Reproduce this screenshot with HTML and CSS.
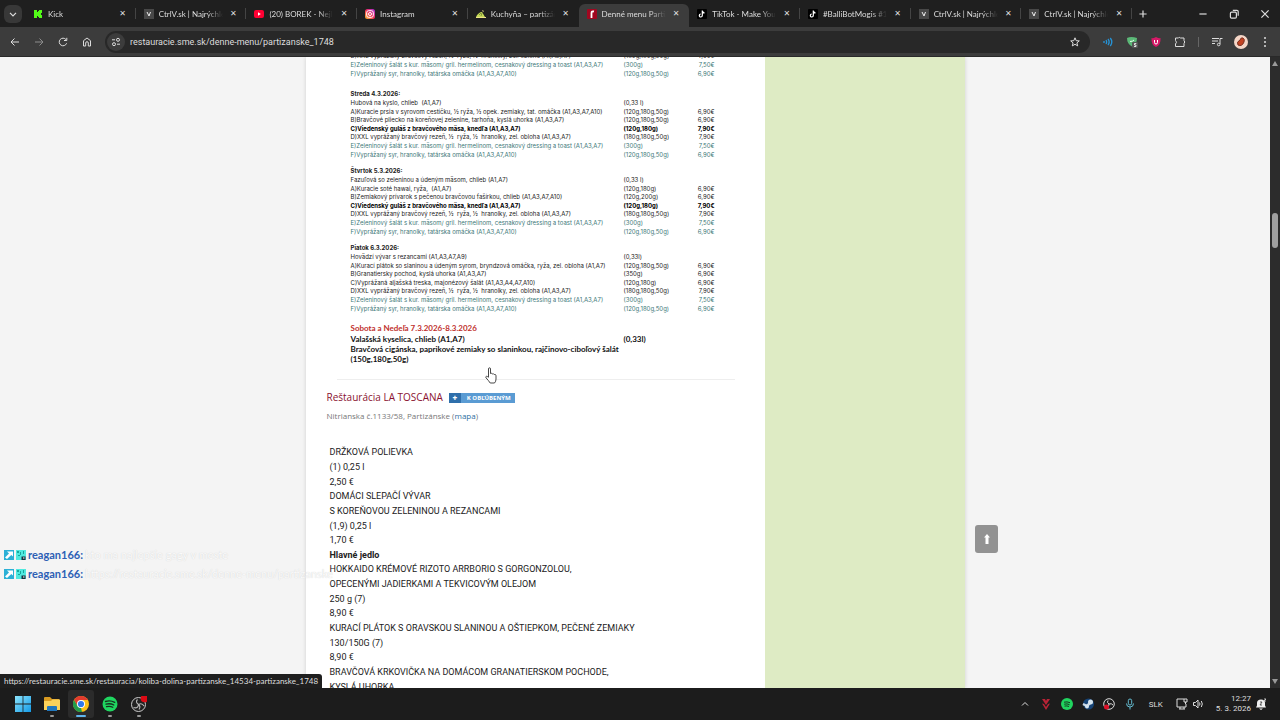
FILE: index.html
```
<!DOCTYPE html>
<html lang="sk">
<head>
    <meta charset="UTF-8">
    <meta name="viewport" content="width=device-width, initial-scale=1.0">
    <title>Denné menu Partizánske</title>
    <link rel="stylesheet" href="styles.css">
</head>
<body>
    <header class="browser">
        <div class="tab-strip">
            <button class="tab-search" aria-label="Hľadať karty"><svg viewBox="0 0 10 10"><path d="M2.5 4 5 6.5 7.5 4" /></svg></button>
            <nav class="tabs">
                <div class="tab">
                    <svg class="favicon" viewBox="0 0 10 10"><path fill="#53fc18" d="M1 1h3v2h1V2h1V1h3v3H8v1H7v0h1v1h1v3H6V8H5V7H4v2H1z" /></svg>
                    <a href="#">Kick</a><button aria-label="Zavrieť"></button>
                </div>
                <div class="tab">
                    <svg class="favicon" viewBox="0 0 10 10"><path fill="#484848" d="M0 0h10v10H0z" /><path d="M3 3l2 4 1.500-4" fill="none" stroke="#eee" /></svg>
                    <a href="#">CtrlV.sk | Najrýchlejšie</a><button aria-label="Zavrieť"></button>
                </div>
                <div class="tab">
                    <svg class="favicon" viewBox="0 0 10 10"><rect y="1" width="10" height="8" rx="2" fill="#f03" /><path fill="#fff" d="M4 3.300v3.400L6.800 5z" /></svg>
                    <a href="#">(20) BOREK - Nejlepší</a><button aria-label="Zavrieť"></button>
                </div>
                <div class="tab">
                    <svg class="favicon" viewBox="0 0 10 10"><defs><linearGradient id="insta" x1="0" y1="1" x2="1" y2="0"><stop stop-color="#fdc02f" /><stop offset=".5" stop-color="#f22f5b" /><stop offset="1" stop-color="#a02fe0" /></linearGradient></defs><rect width="10" height="10" rx="2.500" fill="url(#insta)" /><g fill="none" stroke="#fff"><rect x="1.700" y="1.700" width="6.600" height="6.600" rx="2" /><circle cx="5" cy="5" r="1.500" /></g></svg>
                    <a href="#">Instagram</a><button aria-label="Zavrieť"></button>
                </div>
                <div class="tab">
                    <svg class="favicon" viewBox="0 0 10 10"><path fill="#c5d957" d="M0 8c1-3 4-5 6-5l3 5z" /><path fill="#eee38a" d="M0 8h10v1H0zM6 1l2 1-1 1z" /><path stroke="#506020" d="M3 6l2-2M5 7l1-3" stroke-width=".6" /></svg>
                    <a href="#">Kuchyňa – partizánske</a><button aria-label="Zavrieť"></button>
                </div>
                <div class="tab active">
                    <svg class="favicon" viewBox="0 0 10 10"><rect width="10" height="10" rx="1" fill="#a00720" /><path d="M4.500 9V4q0-2 2.500-1.500" fill="none" stroke="#fff" stroke-width="1.800" /></svg>
                    <a href="#">Denné menu Partizánske</a><button aria-label="Zavrieť"></button>
                </div>
                <div class="tab">
                    <svg class="favicon" viewBox="0 0 10 10"><rect width="10" height="10" rx="1" fill="#000" /><path d="M5.300 1.500v5a1.500 1.500 0 1 1-1.500-1.500M5.300 2q.5 1.800 2.200 1.800" fill="none" stroke="#fff" stroke-width="1.200" /></svg>
                    <a href="#">TikTok - Make Your Day</a><button aria-label="Zavrieť"></button>
                </div>
                <div class="tab">
                    <svg class="favicon" viewBox="0 0 10 10"><rect width="10" height="10" rx="1" fill="#000" /><path d="M5.300 1.500v5a1.500 1.500 0 1 1-1.500-1.500M5.300 2q.5 1.800 2.200 1.800" fill="none" stroke="#fff" stroke-width="1.200" /></svg>
                    <a href="#">#BalliBotMogis #1</a><button aria-label="Zavrieť"></button>
                </div>
                <div class="tab">
                    <svg class="favicon" viewBox="0 0 10 10"><path fill="#484848" d="M0 0h10v10H0z" /><path d="M3 3l2 4 1.500-4" fill="none" stroke="#eee" /></svg>
                    <a href="#">CtrlV.sk | Najrýchlejšie</a><button aria-label="Zavrieť"></button>
                </div>
                <div class="tab">
                    <svg class="favicon" viewBox="0 0 10 10"><path fill="#484848" d="M0 0h10v10H0z" /><path d="M3 3l2 4 1.500-4" fill="none" stroke="#eee" /></svg>
                    <a href="#">CtrlV.sk | Najrýchlejšie</a><button aria-label="Zavrieť"></button>
                </div>
            </nav>
            <button class="new-tab" aria-label="Nová karta"><svg viewBox="0 0 10 10"><path d="M5 2v6M2 5h6" /></svg></button>
            <div class="window-buttons">
                <button aria-label="Minimalizovať"><svg viewBox="0 0 10 10"><path d="M2 5h6" /></svg></button>
                <button aria-label="Obnoviť"><svg viewBox="0 0 10 10"><rect x="2" y="3.500" width="5" height="5" rx="1" /><path d="M4 2h3.500q1 0 1 1v3.500" /></svg></button>
                <button aria-label="Zavrieť okno"><svg viewBox="0 0 10 10"><path d="M2 2l6 6M8 2 2 8" /></svg></button>
            </div>
        </div>
        <div class="toolbar">
            <button aria-label="Späť"><svg viewBox="0 0 12 12"><path d="M10 6H2M5.500 2.500 2 6l3.500 3.500" /></svg></button>
            <button class="dim" aria-label="Dopredu"><svg viewBox="0 0 12 12"><path d="M2 6h8M6.500 2.500 10 6 6.500 9.500" /></svg></button>
            <button aria-label="Obnoviť stránku"><svg viewBox="0 0 12 12"><path d="M9.600 7.300A3.800 3.800 0 1 1 9 3.600M9.800 1.800v2.700H7" /></svg></button>
            <button aria-label="Domov"><svg viewBox="0 0 12 12"><path d="M2.500 10V4.700L6 2l3.500 2.700V10H7.300V7a1.300 1.300 0 0 0-2.600 0v3z" /></svg></button>
            <div class="address">
                <span class="site-info"><svg viewBox="0 0 12 12"><path d="M2 3.800h3M7 8.200h3" /><circle cx="8" cy="3.800" r="1.500" /><circle cx="4" cy="8.200" r="1.500" /></svg></span>
                <input type="text" aria-label="Adresa" value="restauracie.sme.sk/denne-menu/partizanske_1748">
                <button aria-label="Záložka"><svg viewBox="0 0 12 12"><path d="m6 1.800 1.200 2.900 3.100.2-2.400 2 .8 3L6 8.300 3.300 9.900l.8-3-2.400-2 3.100-.2z" /></svg></button>
            </div>
            <div class="extensions">
                <button aria-label="Zvuk"><svg viewBox="0 0 12 12"><g stroke="#2594d8" stroke-width="1.300"><path d="M2 5v2M4 4q1.300 2 0 4M6 3q2.300 3 0 6M8.300 2q3 4 0 8" /></g></svg></button>
                <button aria-label="Ochrana"><svg viewBox="0 0 12 12"><path d="M1 2q4-2 10 0 0 6-5 8.500Q1 8 1 2z" fill="#5cb978" stroke="none" /><path d="M4 5.500q3 0 4-1.500" stroke="#e5ffe9" /><rect x="6" y="6" width="6" height="6" rx="1" fill="#555" stroke="none" /><path d="M10.300 7.500H8.500V9h1.500v1.500H8" stroke="#fff" stroke-width=".8" /></svg></button>
                <button aria-label="Štít"><svg viewBox="0 0 12 12"><path d="M6 1q2 1.500 4.500 1Q11 9 6 11 1 9 1.500 2 4 2.500 6 1z" fill="#d51967" stroke="none" /><path d="M4.500 4v2.500a1.500 1.500 0 0 0 3 0V4" stroke="#fff" /></svg></button>
                <button aria-label="Rozšírenia"><svg viewBox="0 0 12 12"><path d="M1.500 2h3q.5-1.500 2 0H10v2.500q1.500 1.500 0 3V10.500H1.500V8q2-1.800 0-3.500z" /></svg></button>
                <span class="divider"></span>
                <button aria-label="Médiá"><svg viewBox="0 0 12 12"><path d="M1 2.500h7M1 5h6M1 7.500h3M9 8V2.500h2.500" /><circle cx="7.700" cy="8.500" r="1.300" /></svg></button>
                <button class="profile" aria-label="Profil"><svg viewBox="0 0 14 14"><circle cx="7" cy="7" r="7" fill="#f5d6c7" stroke="none" /><path d="M4 10q-2-3 2-5 1-3 3-2 2 1 1 4-2 5-6 3z" fill="#c44322" stroke="#7a3325" /></svg></button>
                <button aria-label="Ponuka"><svg viewBox="0 0 12 12"><g fill="#ddd" stroke="none"><circle cx="6" cy="2" r="1" /><circle cx="6" cy="6" r="1" /><circle cx="6" cy="10" r="1" /></g></svg></button>
            </div>
        </div>
    </header>

    <div class="viewport">
        <main class="page">
            <section class="content">
                <div class="week-menu">
                    <table class="day cut">
                        <tr><td>D)XXL vyprážaný bravčový rezeň, ½ &nbsp;ryža, ½ &nbsp;hranolky, zel. obloha (A1,A3,A7)</td><td>(180g,180g,50g)</td><td>7,90€</td></tr>
                        <tr class="light"><td>E)Zeleninový šalát s kur. mäsom/ gril. hermelínom, cesnakový dressing a toast (A1,A3,A7)</td><td>(300g)</td><td>7,50€</td></tr>
                        <tr class="light"><td>F)Vyprážaný syr, hranolky, tatárska omáčka (A1,A3,A7,A10)</td><td>(120g,180g,50g)</td><td>6,90€</td></tr>
                    </table>
                    <table class="day">
                        <tr><th>Streda 4.3.2026:</th><td></td><td></td></tr>
                        <tr><td>Hubová na kyslo, chlieb &nbsp;(A1,A7)</td><td>(0,33 l)</td><td></td></tr>
                        <tr><td>A)Kuracie prsia v syrovom cestíčku, ½ ryža, ½ opek. zemiaky, tat. omáčka (A1,A3,A7,A10)</td><td>(120g,180g,50g)</td><td>6,90€</td></tr>
                        <tr><td>B)Bravčové pliecko na koreňovej zelenine, tarhoňa, kyslá uhorka (A1,A3,A7)</td><td>(120g,180g,50g)</td><td>6,90€</td></tr>
                        <tr class="strong"><td>C)Viedenský guláš z bravčového mäsa, knedľa (A1,A3,A7)</td><td>(120g,180g)</td><td>7,90€</td></tr>
                        <tr><td>D)XXL vyprážaný bravčový rezeň, ½ &nbsp;ryža, ½ &nbsp;hranolky, zel. obloha (A1,A3,A7)</td><td>(180g,180g,50g)</td><td>7,90€</td></tr>
                        <tr class="light"><td>E)Zeleninový šalát s kur. mäsom/ gril. hermelínom, cesnakový dressing a toast (A1,A3,A7)</td><td>(300g)</td><td>7,50€</td></tr>
                        <tr class="light"><td>F)Vyprážaný syr, hranolky, tatárska omáčka (A1,A3,A7,A10)</td><td>(120g,180g,50g)</td><td>6,90€</td></tr>
                    </table>
                    <table class="day">
                        <tr><th>Štvrtok 5.3.2026:</th><td></td><td></td></tr>
                        <tr><td>Fazuľová so zeleninou a údeným mäsom, chlieb (A1,A7)</td><td>(0,33 l)</td><td></td></tr>
                        <tr><td>A)Kuracie soté hawai, ryža, &nbsp;(A1,A7)</td><td>(120g,180g)</td><td>6,90€</td></tr>
                        <tr><td>B)Zemiakový prívarok s pečenou bravčovou fašírkou, chlieb (A1,A3,A7,A10)</td><td>(120g,200g)</td><td>6,90€</td></tr>
                        <tr class="strong"><td>C)Viedenský guláš z bravčového mäsa, knedľa (A1,A3,A7)</td><td>(120g,180g)</td><td>7,90€</td></tr>
                        <tr><td>D)XXL vyprážaný bravčový rezeň, ½ &nbsp;ryža, ½ &nbsp;hranolky, zel. obloha (A1,A3,A7)</td><td>(180g,180g,50g)</td><td>7,90€</td></tr>
                        <tr class="light"><td>E)Zeleninový šalát s kur. mäsom/ gril. hermelínom, cesnakový dressing a toast (A1,A3,A7)</td><td>(300g)</td><td>7,50€</td></tr>
                        <tr class="light"><td>F)Vyprážaný syr, hranolky, tatárska omáčka (A1,A3,A7,A10)</td><td>(120g,180g,50g)</td><td>6,90€</td></tr>
                    </table>
                    <table class="day">
                        <tr><th>Piatok 6.3.2026:</th><td></td><td></td></tr>
                        <tr><td>Hovädzí vývar s rezancami (A1,A3,A7,A9)</td><td>(0,33l)</td><td></td></tr>
                        <tr><td>A)Kurací plátok so slaninou a údeným syrom, bryndzová omáčka, ryža, zel. obloha (A1,A7)</td><td>(120g,180g,50g)</td><td>6,90€</td></tr>
                        <tr><td>B)Granatiersky pochod, kyslá uhorka (A1,A3,A7)</td><td>(350g)</td><td>6,90€</td></tr>
                        <tr><td>C)Vyprážaná aljašská treska, majonézový šalát (A1,A3,A4,A7,A10)</td><td>(120g,180g)</td><td>6,90€</td></tr>
                        <tr><td>D)XXL vyprážaný bravčový rezeň, ½ &nbsp;ryža, ½ &nbsp;hranolky, zel. obloha (A1,A3,A7)</td><td>(180g,180g,50g)</td><td>7,90€</td></tr>
                        <tr class="light"><td>E)Zeleninový šalát s kur. mäsom/ gril. hermelínom, cesnakový dressing a toast (A1,A3,A7)</td><td>(300g)</td><td>7,50€</td></tr>
                        <tr class="light"><td>F)Vyprážaný syr, hranolky, tatárska omáčka (A1,A3,A7,A10)</td><td>(120g,180g,50g)</td><td>6,90€</td></tr>
                    </table>
                    <table class="weekend">
                        <tr class="title"><th>Sobota a Nedeľa 7.3.2026-8.3.2026</th><td></td></tr>
                        <tr><td>Valašská kyselica, chlieb (A1,A7)</td><td>(0,33l)</td></tr>
                        <tr><td>Bravčová cigánska, paprikové zemiaky so slaninkou, rajčinovo-ciboľový šalát (150g,180g,50g)</td><td></td></tr>
                    </table>
                </div>
                <article class="restaurant">
                    <div class="heading">
                        <h2>Reštaurácia LA TOSCANA</h2>
                        <button class="favourite"><b>+</b><span>K OBĽÚBENÝM</span></button>
                    </div>
                    <p class="place">Nitrianska č.1133/58, Partizánske (<a href="#">mapa</a>)</p>
                    <ul class="dishes">
                        <li>DRŽKOVÁ POLIEVKA</li>
                        <li>(1) 0,25 l</li>
                        <li>2,50 €</li>
                        <li>DOMÁCI SLEPAČÍ VÝVAR</li>
                        <li>S KOREŇOVOU ZELENINOU A REZANCAMI</li>
                        <li>(1,9) 0,25 l</li>
                        <li>1,70 €</li>
                        <li><b>Hlavné jedlo</b></li>
                        <li>HOKKAIDO KRÉMOVÉ RIZOTO ARRBORIO S GORGONZOLOU,</li>
                        <li>OPECENÝMI JADIERKAMI A TEKVICOVÝM OLEJOM</li>
                        <li>250 g (7)</li>
                        <li>8,90 €</li>
                        <li>KURACÍ PLÁTOK S ORAVSKOU SLANINOU A OŠTIEPKOM, PEČENÉ ZEMIAKY</li>
                        <li>130/150G (7)</li>
                        <li>8,90 €</li>
                        <li>BRAVČOVÁ KRKOVIČKA NA DOMÁCOM GRANATIERSKOM POCHODE,</li>
                        <li>KYSLÁ UHORKA</li>
                    </ul>
                </article>
            </section>
            <aside class="side"></aside>
        </main>
        <div class="scrollbar"><i class="up"></i><i class="thumb"></i><i class="down"></i></div>

        <button class="to-top" aria-label="Hore"><svg viewBox="0 0 12 12"><path fill="#fff" d="M6 1l3 3.500H7.500V11h-3V4.500H3z" /></svg></button>
        <div class="chat">
            <p>
                <svg viewBox="0 0 10 10"><path fill="#2bb0d6" d="M0 0h10v10H0z" /><path fill="#fff" d="M3 1.500h6v5L7.300 5 3 9 1 7.500 5 3.500z" /></svg>
                <svg viewBox="0 0 10 10"><path fill="#4fe9df" d="M0 0h10v10H0z" /><path fill="#16a79c" d="M1 1h2v2H1zM4 2h1v3H4zM7 1h1v3H7zM2 5h2v1H2z" /><path fill="#17323f" d="M5.500 6.500h4V10h-4z" /><path fill="#fff" d="M7 7.500h1.500v1H7z" /></svg>
                <b>reagan166:</b><span>kto ma najlepšie gagy v meste</span>
            </p>
            <p>
                <svg viewBox="0 0 10 10"><path fill="#2bb0d6" d="M0 0h10v10H0z" /><path fill="#fff" d="M3 1.500h6v5L7.300 5 3 9 1 7.500 5 3.500z" /></svg>
                <svg viewBox="0 0 10 10"><path fill="#4fe9df" d="M0 0h10v10H0z" /><path fill="#16a79c" d="M1 1h2v2H1zM4 2h1v3H4zM7 1h1v3H7zM2 5h2v1H2z" /><path fill="#17323f" d="M5.500 6.500h4V10h-4z" /><path fill="#fff" d="M7 7.500h1.500v1H7z" /></svg>
                <b>reagan166:</b><span>https://restauracie.sme.sk/denne-menu/partizanske</span>
            </p>
        </div>
        <div class="status">https://restauracie.sme.sk/restauracia/koliba-dolina-partizanske_14534-partizanske_1748</div>
        <svg class="cursor" viewBox="0 0 12 17"><path d="M3.500 10V2q0-1.200 1-1.200t1 1.200v4.500q1.500-.6 2 .4 1.400-.4 1.800.6 1.700-.3 1.700 1.200V12q0 2.500-1.500 4H5.200Q3.500 13.500 1 10.800q-.6-1.300.5-1.500 1 0 2 1.200" fill="#fff" stroke="#333" stroke-width=".9" /></svg>
    </div>

    <footer class="taskbar">
        <div class="apps">
            <button aria-label="Štart"><svg viewBox="0 0 16 16"><defs><linearGradient id="win" x2="1" y2="1"><stop stop-color="#8ce4fb" /><stop offset="1" stop-color="#149be8" /></linearGradient></defs><path fill="url(#win)" d="M0 0h7.600v7.600H0zM8.400 0H16v7.600H8.400zM0 8.400h7.600V16H0zM8.400 8.400H16V16H8.400z" /></svg></button>
            <button class="open" aria-label="Prieskumník"><svg viewBox="0 0 16 16"><path fill="#d99b21" d="M0 2q0-1 1-1h5l2 2h7v4H0z" /><path fill="#fbd25a" d="M0 5h7l1.500-1.500H16V14H0z" /><path fill="#2177bd" d="M3 15v-4q0-1 1-1h8q1 0 1 1v4z" /></svg></button>
            <button class="open current" aria-label="Chrome"><svg viewBox="0 0 16 16"><circle cx="8" cy="8" r="8" fill="#fbc116" /><path fill="#e33b2e" d="M1.070 4A8 8 0 0 1 14.930 4H8L4.540 10z" /><path fill="#229c4b" d="M1.070 4 4.540 10 8 12 9 15.940A8 8 0 0 1 1.070 4z" /><circle cx="8" cy="8" r="4" fill="#fff" /><circle cx="8" cy="8" r="3.100" fill="#3179e8" /></svg></button>
            <button class="open" aria-label="Spotify"><svg viewBox="0 0 16 16"><circle cx="8" cy="8" r="7.500" fill="#1fd660" /><path d="M3.500 5.500q5-1.400 9.200.9M4 8.200q4.200-1.200 7.800.8M4.500 10.700q3.500-1 6.300.6" fill="none" stroke="#17311f" stroke-width="1.300" stroke-linecap="round" /></svg></button>
            <button class="open" aria-label="OBS"><svg viewBox="0 0 16 16"><circle cx="7.500" cy="8.500" r="7" fill="#222" stroke="#ccc" /><path d="M6.500 3.500q-2.500 2.500 1 5 3.500-2 5.500 1.500M7.500 8.500q-.5 4.500-5 3M7.500 8.500q2.500 2 .5 5" fill="none" stroke="#bbb" stroke-width="1.100" /><circle cx="13.500" cy="2.500" r="3.800" fill="#dc0a14" /></svg></button>
        </div>
        <div class="tray">
            <svg viewBox="0 0 12 12"><path d="M3 7.500 6 4.500l3 3" /></svg>
            <svg viewBox="0 0 12 12"><path fill="#b92336" stroke="none" d="M2 1h3l1 2 1-2h3L6 7zM2 5.500 6 12l4-6.500-2 .5-2 3-2-3z" /></svg>
            <svg viewBox="0 0 12 12"><circle cx="6" cy="6" r="6" fill="#20d45f" stroke="none" /><path d="M3 4.200q3-.9 6 .5M3.200 6.200q3-.9 5.300.5M3.500 8.100q2.500-.6 4.500.4" stroke="#173b22" /></svg>
            <svg viewBox="0 0 12 12"><circle cx="6.500" cy="6" r="5.500" fill="#164477" stroke="none" /><path d="M1 6l4 2 3-3" stroke="#cbd9e6" stroke-width="2.500" /><circle cx="8.500" cy="4" r="2.500" fill="#d5e5f0" stroke="none" /><circle cx="5" cy="8.500" r="2" fill="#d5e5f0" stroke="none" /></svg>
            <svg viewBox="0 0 12 12"><circle cx="6" cy="6" r="5.300" /><path d="M5 2.500q-1.500 2 1 3.500 2.500-1 4 1M6 6q0 3-2 3.500" /><circle cx="3.500" cy="9" r="2.500" fill="#dc1027" stroke="none" /></svg>
            <svg viewBox="0 0 12 12"><g stroke="#65bdd2"><rect x="4.300" y="1" width="3.400" height="6" rx="1.700" /><path d="M2.500 5.500q0 3.500 3.500 3.500t3.500-3.500M6 9v2.500" /></g></svg>
            <span class="lang">SLK</span>
            <div class="quick">
                <svg viewBox="0 0 12 12"><path d="M8 1H1v8h9V6M3 11h6M4 9v2M8 9v2M8 1h3v3H8zM9.500 4v2" /></svg>
                <svg viewBox="0 0 12 12"><path d="M1.500 4.500h2L6 2v8L3.500 7.500h-2zM7.500 4.500q1 1.500 0 3M9.300 3q2 3 0 6" /></svg>
            </div>
            <div class="date">
                <div class="clock"><time>12:27</time><span>5. 3. 2026</span></div>
                <svg viewBox="0 0 12 12"><path fill="#eee" stroke="none" d="M1 9.500l1-2V5q0-3.500 4-3.500T10 5v2.500l1 2zM4 10.500h4L6 12z" /><path d="M5 4h2L5 7h2" stroke="#333" stroke-width=".8" /><path d="M9 1h2L9 3h2" stroke-width=".8" /></svg>
            </div>
        </div>
    </footer>
</body>
</html>
```
FILE: styles.css
```
* {
    box-sizing: border-box;
}

body {
    margin: 0;
    height: 100vh;
    display: flex;
    flex-direction: column;
    overflow: hidden;
    font-family: Roboto, sans-serif;
    background-color: #1c1c1c;
    color: #ddd;
}

button {
    padding: 0;
    border: none;
    background: none;
    color: inherit;
    font: inherit;
    display: flex;
    align-items: center;
    justify-content: center;
}

a {
    color: inherit;
    text-decoration: none;
}

svg {
    flex: none;
}

/* browser frame */
.tab-strip {
    display: flex;
    align-items: center;
    height: 27px;
    background-color: #1f1f1f;
}

.tab-strip svg,
.toolbar svg,
.tray svg {
    width: 12px;
    height: 12px;
    fill: none;
    stroke: #ddd;
}

.tab-search {
    width: 18px;
    height: 18px;
    margin: 0 3px 0 4px;
    border-radius: 6px;
    background-color: #383838;
}

.tabs {
    display: flex;
    flex: 1;
    min-width: 0;
    align-self: stretch;
    padding-top: 4px;
}

.tab {
    position: relative;
    display: flex;
    flex: 1;
    min-width: 0;
    align-items: center;
    padding: 0 7px 4px 8px;
    font-family: Lato, sans-serif;
    font-size: 8px;
}

.tab::after {
    content: "";
    position: absolute;
    right: 0;
    top: 4px;
    width: 1px;
    height: 11px;
    background-color: #444;
}

.tab.active::after,
.tab:has(+ .active)::after {
    display: none;
}

.tab.active {
    background-color: #3c3c3c;
    border-radius: 6px 6px 0 0;
}

.tab-strip .favicon {
    width: 10px;
    height: 10px;
    stroke: none;
}

.tab a {
    flex: 1;
    min-width: 0;
    margin-left: 5px;
    overflow: hidden;
    white-space: nowrap;
    mask-image: linear-gradient(to right, #000 48px, transparent 64px);
}

.tab button {
    width: 12px;
    height: 12px;
}

.tab button::before {
    content: "✕";
    font: 8px "DejaVu Sans", sans-serif;
}

.new-tab {
    width: 22px;
}

.window-buttons {
    display: flex;
    gap: 19px;
    margin: 0 9px 0 43px;
}

.toolbar {
    display: flex;
    align-items: center;
    gap: 12px;
    height: 30px;
    padding: 0 9px;
    background-color: #3c3c3c;
    border-bottom: 1px solid #292929;
}

.toolbar .dim {
    opacity: 0.5;
}

.address {
    display: flex;
    flex: 1;
    align-items: center;
    height: 22px;
    padding: 0 9px 0 2px;
    border-radius: 11px;
    background-color: #282828;
}

.site-info {
    display: flex;
    align-items: center;
    justify-content: center;
    width: 18px;
    height: 18px;
    border-radius: 9px;
    background-color: #3c3c3c;
}

.address input {
    flex: 1;
    min-width: 0;
    padding: 0 5px;
    border: none;
    outline: none;
    background: none;
    color: #ddd;
    font: 9px Roboto, sans-serif;
}

.extensions {
    display: flex;
    align-items: center;
    gap: 12px;
}

.divider {
    width: 1px;
    height: 10px;
    background-color: #666;
}

.profile {
    margin: 0 -1px;
}

.toolbar .profile svg {
    width: 14px;
    height: 14px;
}

/* page area */
.viewport {
    position: relative;
    display: flex;
    flex: 1;
    min-height: 0;
    overflow: hidden;
    background-color: #f4f4f4;
    color: #222;
}

.page {
    display: flex;
    width: 659px;
    margin: 0 auto;
    box-shadow: 0 0 4px rgba(0, 0, 0, 0.15);
}

.content {
    flex: 1;
    background-color: #fff;
    font-family: "Open Sans", sans-serif;
}

.side {
    width: 200px;
    background-color: #deebc4;
}

.week-menu {
    margin: 0 30px 0 31px;
    padding: 0 20px 15px 14px;
    border-bottom: 1px solid #eee;
}

.week-menu table {
    width: 100%;
    table-layout: fixed;
    border-collapse: collapse;
}

.week-menu td,
.week-menu th {
    padding: 0;
    text-align: left;
    white-space: nowrap;
}

.day {
    height: 69px;
    margin-bottom: 8px;
    font-family: Inter, sans-serif;
    font-size: 6px;
    line-height: 8px;
}

.day.cut {
    height: 26px;
    margin: -5px 0 12px;
}

.day tr > :first-child {
    width: 273px;
}

.week-menu .day tr > :last-child {
    width: 30px;
    text-align: right;
}

.light {
    color: #3c7878;
}

.strong {
    color: #000;
    font-weight: bold;
}

.weekend {
    margin-top: 10px;
    color: #111;
    font-family: Lato, sans-serif;
    font-size: 8px;
    font-weight: bold;
    line-height: 10px;
}

.week-menu .weekend td {
    white-space: normal;
}

.weekend tr > :first-child {
    width: 273px;
}

.weekend .title {
    color: #c0302c;
    line-height: 11px;
}

.restaurant {
    padding: 10px 21px;
}

.heading {
    display: flex;
    align-items: center;
    gap: 6px;
}

.heading h2 {
    margin: 0;
    color: #8a1230;
    font-size: 10px;
    font-weight: normal;
    line-height: 15px;
}

.favourite {
    height: 10px;
    background-color: #5a9bd3;
    color: #fff;
    font-size: 6px;
    font-weight: bold;
}

.favourite b {
    width: 12px;
    background-color: #2f6fab;
    font-size: 8px;
    line-height: 10px;
}

.favourite span {
    padding: 0 4px 0 6px;
}

.place {
    margin: 4px 0 22px;
    color: #777;
    font-size: 8px;
    line-height: 14px;
}

.place a {
    color: #2f6f9f;
}

.dishes {
    display: grid;
    grid-auto-rows: 1fr;
    align-items: center;
    height: 249px;
    margin: 0;
    padding: 0 3px;
    list-style: none;
    font-family: Roboto, sans-serif;
    font-size: 9px;
    line-height: 14px;
    white-space: nowrap;
}

.scrollbar {
    display: flex;
    flex-direction: column;
    align-items: center;
    width: 10px;
    padding: 4px 0;
    background-color: #2c2c2c;
}

.scrollbar .up,
.scrollbar .down {
    border: 3px solid transparent;
    border-top: none;
    border-bottom: 5px solid #999;
}

.scrollbar .down {
    margin-top: auto;
    transform: rotate(180deg);
}

.thumb {
    width: 6px;
    height: 35px;
    margin-top: 147px;
    border-radius: 3px;
    background-color: #9f9f9f;
}

/* things lying over the page */
.to-top {
    position: absolute;
    right: 282px;
    bottom: 135px;
    width: 23px;
    height: 28px;
    border-radius: 3px;
    background-color: #929292;
}

.to-top svg {
    width: 12px;
    height: 12px;
}

.chat {
    position: absolute;
    left: 4px;
    bottom: 105px;
    font-family: Lato, sans-serif;
    font-size: 11px;
    line-height: 19px;
}

.chat p {
    display: flex;
    align-items: center;
    gap: 2px;
    margin: 0;
    white-space: nowrap;
}

.chat svg {
    width: 10px;
    height: 10px;
}

.chat b {
    color: #2d5fb5;
}

.chat span {
    color: #fafafa;
    text-shadow: 0 0 1px #ccc;
}

.status {
    position: absolute;
    left: 0;
    bottom: 0;
    padding: 0 4px;
    border-radius: 0 3px 0 0;
    background-color: #1f1f1f;
    color: #ddd;
    font-family: Lato, sans-serif;
    font-size: 8px;
    line-height: 14px;
}

.cursor {
    position: absolute;
    left: 485px;
    top: 310px;
    width: 12px;
    height: 17px;
}

/* taskbar */
.taskbar {
    display: flex;
    align-items: center;
    justify-content: space-between;
    height: 32px;
    padding: 0 13px 0 10px;
    background-color: #1c1c1c;
}

.apps {
    display: flex;
    gap: 3px;
}

.apps button {
    position: relative;
    width: 26px;
    height: 28px;
    border-radius: 3px;
}

.apps svg {
    width: 16px;
    height: 16px;
}

.apps .current {
    background-color: #2b2b2b;
}

.open::after {
    content: "";
    position: absolute;
    bottom: 1px;
    width: 4px;
    height: 2px;
    border-radius: 1px;
    background-color: #999;
}

.current::after {
    width: 10px;
    background-color: #60b5ee;
}

.tray {
    display: flex;
    align-items: center;
    gap: 9px;
    font-size: 8px;
}

.lang {
    margin: 0 4px;
}

.quick,
.date {
    display: flex;
    align-items: center;
    gap: 4px;
}

.quick {
    margin-right: 3px;
}

.clock {
    display: flex;
    flex-direction: column;
    text-align: right;
    line-height: 10px;
}
```
